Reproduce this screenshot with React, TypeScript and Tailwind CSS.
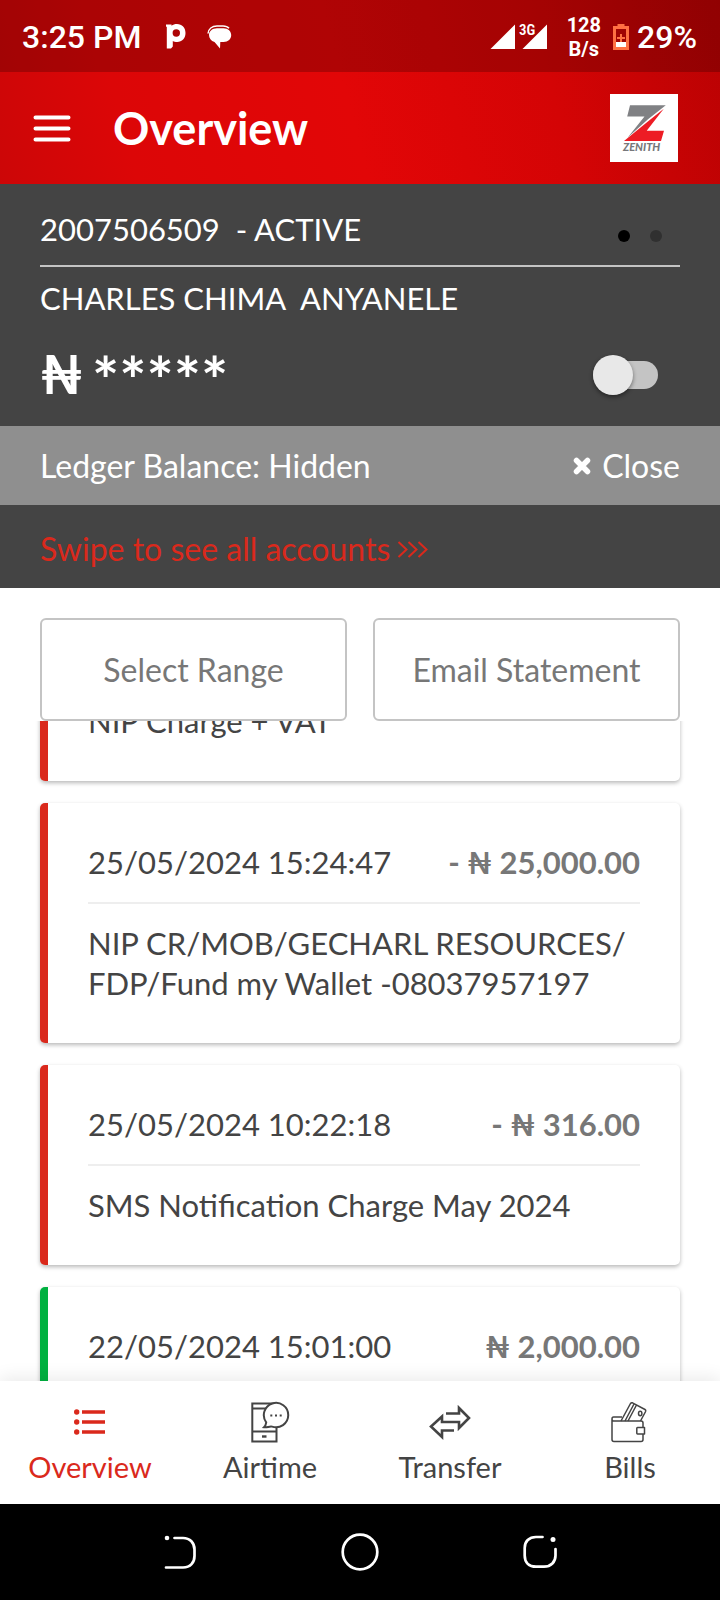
import { useLayoutEffect, useRef, type ReactNode } from "react";

type Entry = {
  id: number;
  kind: "debit" | "credit";
  text?: string;
  date?: string;
  amount?: string;
};

const entries: Entry[] = [
  { id: 1, kind: "debit", text: "NIP Charge + VAT" },
  {
    id: 2,
    kind: "debit",
    date: "25/05/2024 15:24:47",
    amount: "- ₦ 25,000.00",
    text: "NIP CR/MOB/GECHARL RESOURCES/\u200bFDP/Fund my Wallet -08037957197",
  },
  {
    id: 3,
    kind: "debit",
    date: "25/05/2024 10:22:18",
    amount: "- ₦ 316.00",
    text: "SMS Notification Charge May 2024",
  },
  { id: 4, kind: "credit", date: "22/05/2024 15:01:00", amount: "₦ 2,000.00" },
];

function StatusBar() {
  return (
    <div className="flex h-[72px] items-center justify-between bg-black/22 pt-[2px] pr-[23px] pl-[22px] font-[Roboto,sans-serif] text-white">
      <div className="flex items-center">
        <span className="text-[32px] leading-[40px] font-medium">3:25 PM</span>
        <svg className="ml-[25px] h-[26px] w-[20px]" viewBox="0 0 20 26" aria-hidden="true">
          <path
            fill="#fff"
            fillRule="evenodd"
            d="M0 .5h5.500v1.200C7 .5 8.800 0 11 0c5 0 8.500 3.700 8.500 9s-3.500 9-8.300 9c-1.800 0-3.300-.4-4.400-1v5.500L5 24.500H.800V3L0 2.500zM10.300 5.300a3.700 3.700 0 1 0 0 7.400 3.700 3.700 0 0 0 0-7.400z"
          />
        </svg>
        <svg className="ml-[21px] h-[26px] w-[26px]" viewBox="0 0 26 26" aria-hidden="true">
          <path
            fill="#fff"
            d="M13.500 4.200h3c4.700 0 7.700 3 7.700 6.800 0 4-3 7-7.700 7h-3.200L13 24.500 7.500 18C4 17 2 14.300 2 11c0-4 3.400-6.800 8-6.800z"
          />
          <path d="M1 9.500C1.500 5 5 2 10 2h6c3 0 4.800.8 6 2.300" fill="none" stroke="#fff" strokeWidth="1.500" />
        </svg>
      </div>
      <div className="flex items-center">
        <svg className="h-[26px] w-[58px]" viewBox="0 0 58 26" aria-hidden="true">
          <path d="M25 .5V25H.5zM57 .5V25H32.500z" fill="#fff" />
          <path d="M28 0h18v10L40 14H28z" fill="#a60404" />
          <text x="29" y="11" fill="#fff" fontSize="15" fontWeight="600" fontFamily="'Roboto Condensed', Roboto">
            3G
          </text>
        </svg>
        <div className="ml-[19px] text-center text-[20px] leading-[24px] font-bold">
          <div>128</div>
          <div>B/s</div>
        </div>
        <svg className="ml-[12px] h-[26px] w-[16px]" viewBox="0 0 16 26" aria-hidden="true">
          <path d="M4.500 0h7v2H16v24H0V2h4.500z" fill="#ff7043" />
          <path d="M3 5h10v18H3z" fill="#a00404" />
          <path d="M3 18h10v5H3z" fill="#fff" />
          <path d="M8 10v8M4 14h8" stroke="#ff7043" strokeWidth="2" />
        </svg>
        <span className="ml-[8px] text-[32px] leading-[40px] font-medium">29%</span>
      </div>
    </div>
  );
}

function Logo() {
  return (
    <svg className="h-[68px] w-[68px] bg-white" viewBox="0 0 68 68" role="img" aria-label="Zenith">
      <path d="M20 11.300h35.800L38 25.200 17.500 43.700 34.500 22.500H17.200z" fill="#808184" />
      <path d="M53.800 14.700 36.700 36.700H54L51 47H14L38.500 27z" fill="#ed1c24" />
      <text x="13" y="57" fontSize="11" fontWeight="900" fontStyle="italic" fontFamily="Lato" fill="#77787b">
        ZENITH
      </text>
    </svg>
  );
}

function TopBar() {
  return (
    <div className="flex h-[112px] items-center pr-[42px] pl-[33px]">
      <button type="button" aria-label="Menu" className="flex h-[40px] w-[38px] items-center">
        <svg className="h-[28px] w-[38px]" viewBox="0 0 38 28" aria-hidden="true">
          <path d="M2.500 3.500h33M2.500 14.500h33M2.500 25.500h33" stroke="#fff" strokeWidth="4" strokeLinecap="round" />
        </svg>
      </button>
      <h1 className="ml-[42px] flex-1 text-[45px] leading-[52px] font-bold text-white">Overview</h1>
      <Logo />
    </div>
  );
}

function AccountPanel() {
  return (
    <section className="bg-[#444444] text-[31px] leading-[40px] text-white">
      <div className="px-[40px] pt-[25px] pb-[23px]">
        <div className="flex items-center justify-between border-b-2 border-[#c4c4c4] pb-[16px]">
          <span className="whitespace-pre">2007506509  - ACTIVE</span>
          <span className="flex gap-[20px] pt-[14px] pr-[18px]">
            <span className="size-[12px] rounded-full bg-black" />
            <span className="size-[12px] rounded-full bg-[#303030]" />
          </span>
        </div>
        <div className="pt-[11px] whitespace-pre">CHARLES CHIMA  ANYANELE</div>
        <div className="mt-[27px] flex items-center justify-between pt-[2px] pr-[22px]">
          <div className="flex h-[56px] items-start gap-[9px] font-bold">
            <span className="text-[54px] leading-[54px]">₦</span>
            <span className="text-[64px] leading-[66px]">*****</span>
          </div>
          <input
            type="checkbox"
            role="switch"
            aria-label="Show balance"
            className="relative h-[28px] w-[65px] appearance-none rounded-full bg-[#c4c4c4] before:absolute before:-top-[6px] before:left-0 before:size-[40px] before:rounded-full before:bg-[#e8e8e8] before:shadow-[0_2px_4px_rgba(0,0,0,0.45)] before:content-[''] checked:before:left-[25px]"
          />
        </div>
      </div>
      <div className="flex items-center justify-between bg-[#8f8f8f] px-[40px] pt-[20px] pb-[19px] text-[32px]">
        <span>Ledger Balance: Hidden</span>
        <button type="button" className="flex items-center gap-[11px]">
          <svg className="h-[18px] w-[18px]" viewBox="0 0 18 18" aria-hidden="true">
            <path d="M3.500 3.500l11 11M14.500 3.500l-11 11" stroke="#fff" strokeWidth="5.500" strokeLinecap="round" />
          </svg>
          Close
        </button>
      </div>
      <div className="flex items-center gap-[7px] px-[40px] pt-[24px] pb-[19px] text-[32px] text-[#da291c]">
        <span>Swipe to see all accounts</span>
        <svg className="h-[18px] w-[31px]" viewBox="0 0 31 18" fill="none" stroke="currentColor" strokeWidth="2" aria-hidden="true">
          <path d="M1.500 2l8 7.500-8 7.500M11.500 2l8 7.500-8 7.500M21.500 2l8 7.500-8 7.500" />
        </svg>
      </div>
    </section>
  );
}

function EntryCard({ entry }: { entry: Entry }) {
  const bar = entry.kind === "debit" ? "border-[#da291c]" : "border-[#00b140]";
  return (
    <li
      className={`${bar} rounded-[5px] border-l-8 bg-white px-[40px] pt-[39px] pb-[40px] shadow-[0_2px_4px_rgba(0,0,0,0.28)]`}
    >
      {entry.date && (
        <div className="mb-[19px] flex justify-between border-b-2 border-[#eeeeee] pb-[20px]">
          <time>{entry.date}</time>
          <span className="font-bold text-[#777777]">{entry.amount}</span>
        </div>
      )}
      {entry.text && <p>{entry.text}</p>}
    </li>
  );
}

function History() {
  const list = useRef<HTMLDivElement>(null);
  useLayoutEffect(() => {
    if (list.current) list.current.scrollTop = 59;
  }, []);
  return (
    <div ref={list} className="min-h-0 flex-1 overflow-y-auto [scrollbar-width:none]">
      <ul className="flex flex-col gap-[22px] px-[40px] pb-[22px] text-[31px] leading-[40px] text-[#444444]">
        {entries.map((entry) => (
          <EntryCard key={entry.id} entry={entry} />
        ))}
      </ul>
    </div>
  );
}

function Tab({ label, active, children }: { label: string; active?: boolean; children: ReactNode }) {
  return (
    <a
      href="#"
      aria-current={active ? "page" : undefined}
      className={`flex flex-1 flex-col items-center gap-[6px] ${active ? "text-[#da291c]" : "text-[#444444]"}`}
    >
      <svg className="size-[42px]" viewBox="0 0 42 42" fill="none" stroke="currentColor" strokeWidth="2" aria-hidden="true">
        {children}
      </svg>
      <span className="text-[29px] leading-[36px]">{label}</span>
    </a>
  );
}

function TabBar() {
  return (
    <nav className="relative flex bg-white pt-[20px] pb-[19px] shadow-[0_-4px_16px_rgba(0,0,0,0.08)]">
      <Tab label="Overview" active>
        <path d="M13 11h23M13 21h23M13 31h23" strokeWidth="3.600" />
        <g fill="currentColor" stroke="none">
          <circle cx="7.700" cy="11" r="2.700" />
          <circle cx="7.700" cy="21" r="2.700" />
          <circle cx="7.700" cy="31" r="2.700" />
        </g>
      </Tab>
      <Tab label="Airtime">
        <path d="M3 2.500h24M3.300 1.500v40M2.500 40.500h26M27.500 26v15M3 7.500h14M3 30.500h24" />
        <path d="M13 35.500h4.500" strokeWidth="2.400" />
        <path d="M17.200 21.300A12.200 12.200 0 1 1 23 25.600C20.500 25 18 26.800 15 26.300 16.400 25 17 23 17.200 21.300z" fill="#fff" />
        <path d="M21.300 14.500h2M26 14.500h2M30.700 14.500h2" />
      </Tab>
      <Tab label="Transfer">
        <path
          d="M17 12.500h13V7l10 10-10 10v-6H13v-5.500L2 25.500l11 10.500v-6.500h12"
          strokeWidth="2.600"
          strokeLinejoin="miter"
        />
      </Tab>
      <Tab label="Bills">
        <g strokeWidth="1.500" strokeLinejoin="round">
          <path d="M34 26.500V22q0-2-2-2H4.500Q3 20 3 18t1.500-2H13M3 18v20.500q0 2 2 2h27q2 0 2-2v-5.500" />
          <path d="M28.500 26.500h7v6.500h-7q-.7 0-.7-.7v-5q0-.8.700-.8z" />
          <path d="M12 20 21.500 2.500q.8-1.200 2-.7L36 8.500q1.200.7.600 2L31.500 20M16 20l9-17M19 20l8.500-16" />
          <ellipse cx="31.200" cy="12.500" rx="1.700" ry="2.200" />
        </g>
      </Tab>
    </nav>
  );
}

function SystemBar() {
  return (
    <div className="flex h-[96px] items-center bg-black px-[12.5%]">
      <button type="button" aria-label="Back" className="flex flex-1 justify-center">
        <svg className="size-[40px]" viewBox="0 0 40 40" fill="none" stroke="#fff" strokeWidth="2.700" strokeLinecap="round" aria-hidden="true">
          <path d="M14.500 6H23c7 0 11.500 5 11.500 11.500v6.500c0 6.500-4 11.500-11.500 11.500H6" />
          <circle cx="7" cy="6" r="2.300" fill="#fff" stroke="none" />
        </svg>
      </button>
      <button type="button" aria-label="Home" className="flex flex-1 justify-center">
        <svg className="size-[40px]" viewBox="0 0 40 40" fill="none" stroke="#fff" strokeWidth="2.700" aria-hidden="true">
          <circle cx="20" cy="20" r="17.300" />
        </svg>
      </button>
      <button type="button" aria-label="Recent apps" className="flex flex-1 justify-center">
        <svg className="size-[40px]" viewBox="0 0 40 40" fill="none" stroke="#fff" strokeWidth="2.700" strokeLinecap="round" aria-hidden="true">
          <path d="M22.500 5H16C9 5 4.700 9.500 4.700 16v7.500C4.700 30.500 9 34.700 16 34.700h8c7 0 11.500-4.700 11.500-11.200V17" />
          <circle cx="33" cy="7.500" r="2.500" fill="#fff" stroke="none" />
        </svg>
      </button>
    </div>
  );
}

export default function App() {
  return (
    <div className="flex h-screen flex-col overflow-hidden bg-white font-[Lato,sans-serif]">
      <header className="bg-[linear-gradient(75deg,#cc0607_0%,#dc0607_18%,#e20607_48%,#d40405_75%,#ba0203_100%)]">
        <StatusBar />
        <TopBar />
      </header>
      <AccountPanel />
      <div className="flex gap-[26px] px-[40px] pt-[30px] text-[32px] leading-[40px] text-[#777777]">
        <button type="button" className="flex-1 rounded-[6px] border-2 border-[#c4c4c4] pt-[30px] pb-[29px]">
          Select Range
        </button>
        <button type="button" className="flex-1 rounded-[6px] border-2 border-[#c4c4c4] pt-[30px] pb-[29px]">
          Email Statement
        </button>
      </div>
      <History />
      <TabBar />
      <SystemBar />
    </div>
  );
}
